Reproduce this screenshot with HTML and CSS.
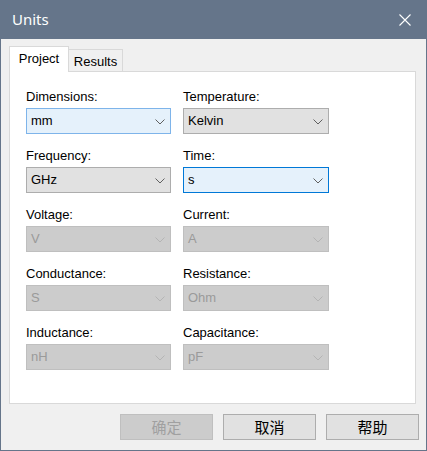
FILE: index.html
```html
<!DOCTYPE html>
<html>
<head>
<meta charset="utf-8">
<link rel="stylesheet" href="styles.css">
</head>
<body>
<div class="window">
  <div class="titlebar">
    <span class="title">Units</span>
    <span class="close"><svg width="12" height="12" viewBox="0 0 12 12"><path d="M0.5 0.5 L11.5 11.5 M11.5 0.5 L0.5 11.5" stroke="#ffffff" stroke-width="1.1" fill="none"/></svg></span>
  </div>
  <div class="body">
    <div class="tabs">
      <div class="tab tab-active">Project</div>
      <div class="tab tab-inactive">Results</div>
    </div>
    <div class="panel">
      <div class="grid">
        <div class="field"><div class="label">Dimensions:</div><div class="combo combo-hover"><span class="value">mm</span><svg class="chev" width="10" height="6" viewBox="0 0 10 6"><path d="M0.5 0.5 L5 5 L9.5 0.5" fill="none" stroke="#606060" stroke-width="1"/></svg></div></div>
        <div class="field"><div class="label">Temperature:</div><div class="combo"><span class="value">Kelvin</span><svg class="chev" width="10" height="6" viewBox="0 0 10 6"><path d="M0.5 0.5 L5 5 L9.5 0.5" fill="none" stroke="#606060" stroke-width="1"/></svg></div></div>
        <div class="field"><div class="label">Frequency:</div><div class="combo"><span class="value">GHz</span><svg class="chev" width="10" height="6" viewBox="0 0 10 6"><path d="M0.5 0.5 L5 5 L9.5 0.5" fill="none" stroke="#606060" stroke-width="1"/></svg></div></div>
        <div class="field"><div class="label">Time:</div><div class="combo combo-focus"><span class="value">s</span><svg class="chev" width="10" height="6" viewBox="0 0 10 6"><path d="M0.5 0.5 L5 5 L9.5 0.5" fill="none" stroke="#606060" stroke-width="1"/></svg></div></div>
        <div class="field"><div class="label">Voltage:</div><div class="combo combo-disabled"><span class="value">V</span><svg class="chev" width="10" height="6" viewBox="0 0 10 6"><path d="M0.5 0.5 L5 5 L9.5 0.5" fill="none" stroke="#b4b4b4" stroke-width="1"/></svg></div></div>
        <div class="field"><div class="label">Current:</div><div class="combo combo-disabled"><span class="value">A</span><svg class="chev" width="10" height="6" viewBox="0 0 10 6"><path d="M0.5 0.5 L5 5 L9.5 0.5" fill="none" stroke="#b4b4b4" stroke-width="1"/></svg></div></div>
        <div class="field"><div class="label">Conductance:</div><div class="combo combo-disabled"><span class="value">S</span><svg class="chev" width="10" height="6" viewBox="0 0 10 6"><path d="M0.5 0.5 L5 5 L9.5 0.5" fill="none" stroke="#b4b4b4" stroke-width="1"/></svg></div></div>
        <div class="field"><div class="label">Resistance:</div><div class="combo combo-disabled"><span class="value">Ohm</span><svg class="chev" width="10" height="6" viewBox="0 0 10 6"><path d="M0.5 0.5 L5 5 L9.5 0.5" fill="none" stroke="#b4b4b4" stroke-width="1"/></svg></div></div>
        <div class="field"><div class="label">Inductance:</div><div class="combo combo-disabled"><span class="value">nH</span><svg class="chev" width="10" height="6" viewBox="0 0 10 6"><path d="M0.5 0.5 L5 5 L9.5 0.5" fill="none" stroke="#b4b4b4" stroke-width="1"/></svg></div></div>
        <div class="field"><div class="label">Capacitance:</div><div class="combo combo-disabled"><span class="value">pF</span><svg class="chev" width="10" height="6" viewBox="0 0 10 6"><path d="M0.5 0.5 L5 5 L9.5 0.5" fill="none" stroke="#b4b4b4" stroke-width="1"/></svg></div></div>
      </div>
    </div>
    <div class="buttons">
      <div class="btn btn-disabled">确定</div>
      <div class="btn">取消</div>
      <div class="btn">帮助</div>
    </div>
  </div>
</div>
</body>
</html>
```

FILE: styles.css
```css
html, body {
  margin: 0;
  padding: 0;
}
body {
  width: 427px;
  height: 451px;
  overflow: hidden;
  font-family: "Liberation Sans", Arial, sans-serif;
  font-size: 13px;
  color: #000;
}
.window {
  box-sizing: border-box;
  width: 427px;
  height: 451px;
  border: 1px solid #65758a;
  border-top: none;
  background: #f0f0f0;
  display: flex;
  flex-direction: column;
}
.titlebar {
  height: 39px;
  margin: 0 -1px;
  background: #65758a;
  display: flex;
  align-items: center;
  justify-content: space-between;
  flex: none;
}
.title {
  font-family: "Noto Sans", "Open Sans", sans-serif;
  font-size: 15px;
  color: #ffffff;
  padding-left: 12px;
  line-height: 20px;
  margin-top: -1px;
}
.close {
  width: 12px;
  height: 12px;
  margin-right: 16px;
  display: flex;
}
.body {
  flex: 1;
  padding: 7px 10px 0 8px;
  display: flex;
  flex-direction: column;
}
.tabs {
  display: flex;
  align-items: flex-end;
  height: 26px;
  margin-bottom: -1px;
}
.tab {
  box-sizing: border-box;
  border: 1px solid #d9d9d9;
  border-bottom: none;
  text-align: center;
}
.tab-active {
  position: relative;
  z-index: 1;
  width: 60px;
  height: 26px;
  background: #ffffff;
  line-height: 24px;
}
.tab-inactive {
  width: 54px;
  height: 23px;
  background: #f0f0f0;
  border-left: none;
  line-height: 24px;
}
.panel {
  box-sizing: border-box;
  height: 333px;
  background: #ffffff;
  border: 1px solid #d9d9d9;
  padding: 17px 0 0 16px;
}
.grid {
  display: grid;
  grid-template-columns: 145px 146px;
  column-gap: 12px;
  row-gap: 14px;
}
.label {
  line-height: 15px;
  height: 15px;
  margin-bottom: 4px;
}
.combo {
  box-sizing: border-box;
  height: 26px;
  border: 1px solid #adadad;
  background: #e1e1e1;
  display: flex;
  align-items: center;
  justify-content: space-between;
  padding: 0 5px 0 4px;
}
.combo-hover {
  background: #e5f1fb;
  border-color: #7eb4ea;
}
.combo-focus {
  background: #e5f1fb;
  border-color: #0078d7;
}
.combo-disabled {
  background: #cccccc;
  border-color: #bfbfbf;
  color: #9a9a9a;
}
.value {
  line-height: 16px;
}
.chev {
  display: block;
  margin-top: 1px;
}
.buttons {
  display: flex;
  justify-content: flex-end;
  gap: 10px;
  margin-top: 10px;
  margin-right: -3px;
}
.btn {
  box-sizing: border-box;
  width: 93px;
  height: 26px;
  border: 1px solid #adadad;
  background: #e1e1e1;
  font-family: "Noto Sans CJK SC", sans-serif;
  font-size: 15px;
  display: flex;
  align-items: center;
  justify-content: center;
  line-height: 18px;
}
.btn-disabled {
  background: #cccccc;
  border-color: #bfbfbf;
  color: #a0a0a0;
}
```
